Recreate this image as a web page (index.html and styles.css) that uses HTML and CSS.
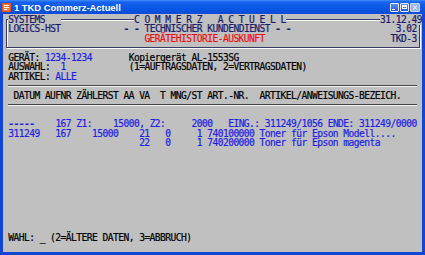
FILE: index.html
```html
<!DOCTYPE html>
<html>
<head>
<meta charset="utf-8">
<link rel="stylesheet" href="styles.css">
</head>
<body>
<div class="window">
  <div class="titlebar">
    <svg class="appicon" width="9" height="9" viewBox="0 0 9 9">
      <rect x="0" y="0" width="9" height="9" fill="#e0501a"/>
      <rect x="1" y="1" width="7" height="7" fill="#f47a3a"/>
      <path d="M2 2.5h5M2 4.5h5M2 6.5h3" stroke="#ffffff" stroke-width="1"/>
    </svg>
    <span class="title">1 TKD Commerz-Actuell</span>
    <div class="buttons">
      <div class="btn"><span class="min-glyph"></span></div>
      <div class="btn"><span class="max-glyph"></span></div>
      <div class="btn btn-off">
        <svg width="9" height="9" viewBox="0 0 9 9"><path d="M2.5 2.5l4 4M6.5 2.5l-4 4" stroke="#dfe7f7" stroke-width="1.2"/></svg>
      </div>
    </div>
  </div>
  <div class="screen">
    <div class="box">
      <div class="box-inner">
        <div class="row nav"> <span class="mask">SYSTEMS   </span>              <span class="mask">C O M M E R Z   A C T U E L L</span>                  <span class="mask">31.12.49</span> </div>
        <div class="row nav"> <span class="mask">LOGICS-HST</span>            <span class="mask"><b class="dash">- -</b> TECHNISCHER KUNDENDIENST <b class="dash">- -</b></span>                    <span class="mask">3.02</span></div>
        <div class="row nav">                           <span class="mask red">GERÄTEHISTORIE-AUSKUNFT</span>                        <span class="mask">TKD-3</span></div>
        <div class="row"> </div>
      </div>
    </div>
    <div class="row"> GERÄT: <span class="blue">1234-1234</span>       Kopiergerät AL-1553SG</div>
    <div class="row"> AUSWAHL:  <span class="blue">1</span>            (1=AUFTRAGSDATEN, 2=VERTRAGSDATEN)</div>
    <div class="row"> ARTIKEL: <span class="blue">ALLE</span></div>
    <div class="sep"></div>
    <div class="row">  DATUM AUFNR ZÄHLERST AA VA  T MNG/ST ART.-NR.  ARTIKEL/ANWEISUNGS-BEZEICH.</div>
    <div class="sep"></div>
    <div class="row"> </div>
    <div class="row blue"> <b class="dash">-----</b>    167 Z1:    15000, Z2:     2000   EING.: 311249/1056 ENDE: 311249/0000</div>
    <div class="row blue"> 311249   167    15000    21   0     1 740100000 Toner für Epson Modell....</div>
    <div class="row blue">                          22   0     1 740200000 Toner für Epson magenta</div>
    <div class="row"> </div>
    <div class="row"> </div>
    <div class="row"> </div>
    <div class="row"> </div>
    <div class="row"> </div>
    <div class="row"> </div>
    <div class="row"> </div>
    <div class="row"> </div>
    <div class="row"> </div>
    <div class="row"> WAHL: _ (2=ÄLTERE DATEN, 3=ABBRUCH)</div>
    <div class="row"> </div>
  </div>
</div>
</body>
</html>
```

FILE: styles.css
```css
html, body {
  margin: 0;
  padding: 0;
  background: #c0c0c0;
}
.window {
  width: 425px;
  height: 255px;
  box-sizing: border-box;
  background: #1146d4;
  padding: 0 3px 3px 3px;
  display: flex;
  flex-direction: column;
}
.titlebar {
  height: 14px;
  margin: 0 -3px;
  padding: 0 3px 0 2px;
  display: flex;
  align-items: center;
  background: linear-gradient(#3f8ffc 0px, #1862ee 2px, #0a57e6 8px, #0a4cd6 14px);
  box-sizing: border-box;
}
.appicon {
  display: block;
  margin-right: 3px;
}
.title {
  font-family: "Liberation Sans", Arial, sans-serif;
  font-weight: bold;
  font-size: 9.4px;
  color: #ffffff;
  flex: 1;
}
.buttons {
  display: flex;
  gap: 1px;
  margin-right: 2px;
}
.btn {
  width: 9px;
  height: 9px;
  box-sizing: border-box;
  border: 1px solid #e8eefc;
  border-radius: 1px;
  background: linear-gradient(#5d8ff7, #2459e6);
  position: relative;
  display: flex;
  align-items: center;
  justify-content: center;
}
.btn-off {
  width: 10px;
  background: #9db4ea;
  border-color: #c9d6f3;
}
.btn-off svg {
  display: block;
}
.min-glyph {
  position: absolute;
  left: 1px;
  bottom: 1px;
  width: 3px;
  height: 1px;
  background: #ffffff;
}
.max-glyph {
  width: 5px;
  height: 4px;
  box-sizing: border-box;
  border: 1px solid #ffffff;
  border-top-width: 2px;
}
.screen {
  flex: 1;
  background: #c0c0c0;
  padding-top: 0.5px;
  font-family: "DejaVu Sans Mono", monospace;
  font-size: 9.6px;
  letter-spacing: -0.54px;
  color: #000000;
  -webkit-text-stroke: 0.2px currentColor;
  overflow: hidden;
}
.row {
  height: 9.5px;
  line-height: 9.5px;
  white-space: pre;
}
.box {
  margin: 4.75px 0 4.75px 2.62px;
  width: 414px;
  height: 28.5px;
  box-sizing: border-box;
  border: 1px solid #3a3a66;
  box-shadow: inset 1px 1px 0 #ffffff, 1px 1px 0 #ffffff;
}
.box-inner {
  margin: -5.75px 0 0 -3.62px;
  width: 420px;
}
.mask {
  background: #c0c0c0;
}
.nav {
  color: #1a1a66;
}
.red {
  color: #f01010;
}
.blue {
  color: #1e1ee6;
}
.dash {
  font-weight: bold;
}
.sep {
  height: 9.5px;
  display: flex;
  align-items: center;
  padding-left: 5.24px;
}
.sep::before {
  content: "";
  width: 409px;
  border-top: 1px solid #454545;
  border-bottom: 1px solid #f4f4f4;
}
```
